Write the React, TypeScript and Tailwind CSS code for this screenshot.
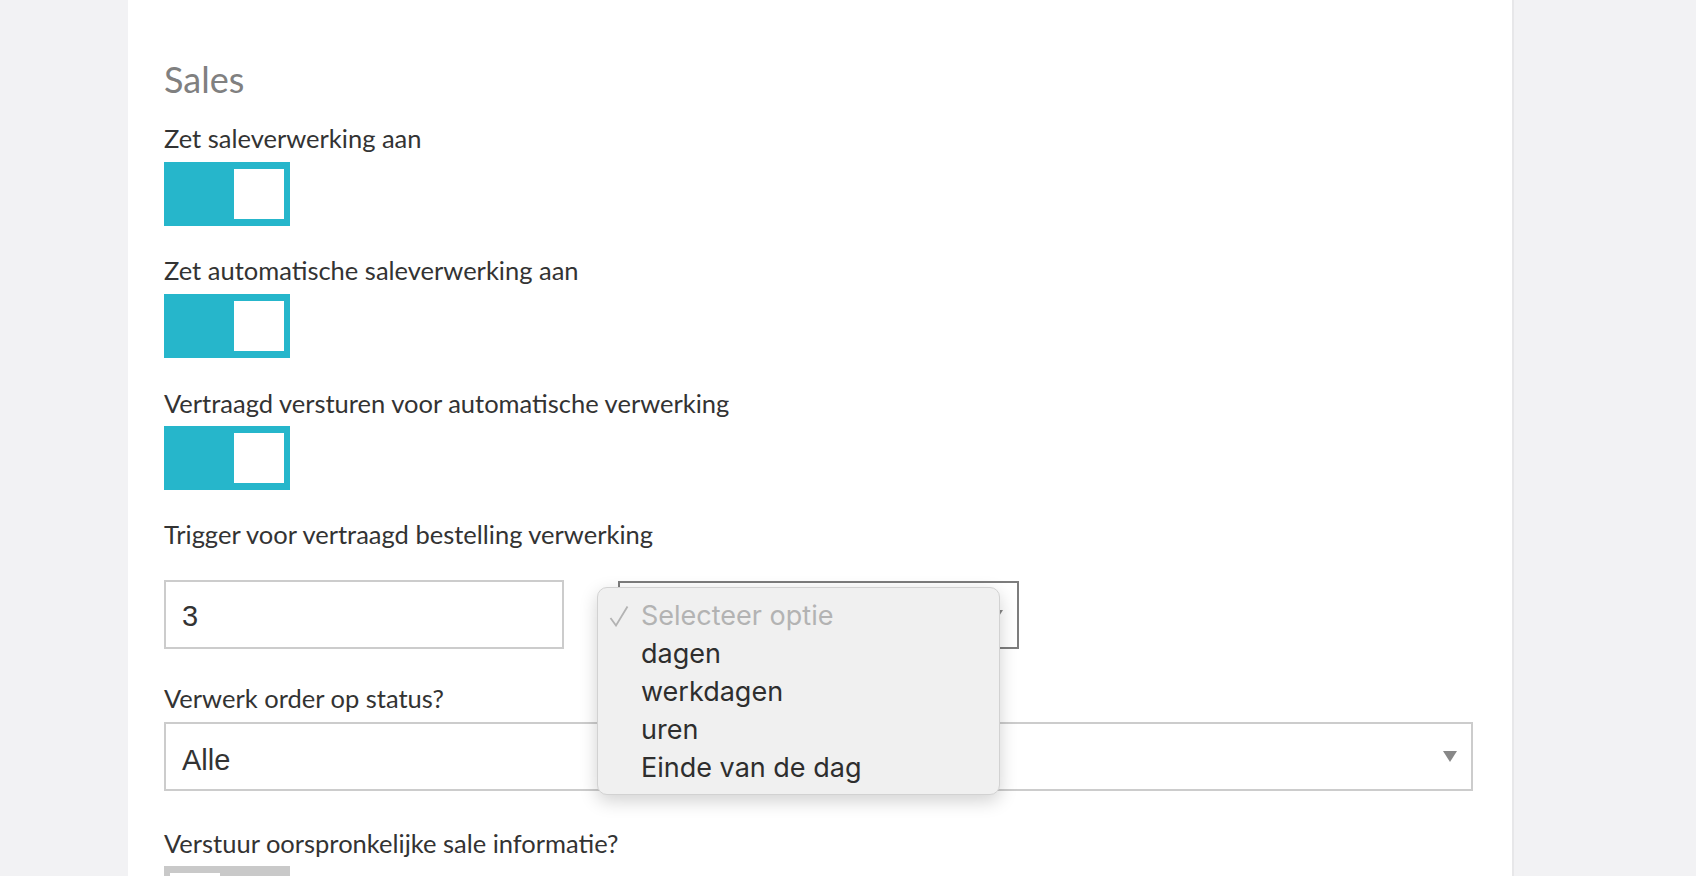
import React from "react";

function Toggle({ on, className = "" }: { on: boolean; className?: string }) {
  return (
    <div
      className={
        "flex h-[64px] w-[126px] shrink-0 items-center px-[6px] " +
        (on ? "justify-end bg-[#26b6cb]" : "justify-start bg-[#c9c9c9]") +
        " " +
        className
      }
    >
      <div className="h-[50px] w-[50px] shrink-0 bg-white" />
    </div>
  );
}

function Label({ children, className = "" }: { children: React.ReactNode; className?: string }) {
  return (
    <div className={"shrink-0 text-[25.5px] leading-[36px] text-[#333333] " + className}>{children}</div>
  );
}

function Arrow() {
  return (
    <svg width="14" height="11" viewBox="0 0 14 11" className="shrink-0">
      <polygon points="0,0 14,0 7,11" fill="#888888" />
    </svg>
  );
}

export default function App() {
  return (
    <div className="flex h-[876px] w-full overflow-hidden bg-[#f2f2f4] font-['Lato','Noto_Sans',sans-serif]">
      <div className="w-[128px] shrink-0" />
      <div className="flex w-[1386px] shrink-0 flex-col border-r-2 border-[#e7e7e9] bg-white pl-[36px] pr-[39px] pt-[58px]">
        <h2 className="shrink-0 text-[36px] font-normal leading-[43px] text-[#808080]">Sales</h2>

        <Label className="mt-[19px]">Zet saleverwerking aan</Label>
        <Toggle on className="mt-[6px]" />

        <Label className="mt-[26px]">Zet automatische saleverwerking aan</Label>
        <Toggle on className="mt-[6px]" />

        <Label className="mt-[27px]">Vertraagd versturen voor automatische verwerking</Label>
        <Toggle on className="mt-[5px]" />

        <Label className="mt-[26px]">Trigger voor vertraagd bestelling verwerking</Label>

        <div className="relative mt-[28px] flex shrink-0 items-start gap-[54px]">
          <div className="flex h-[69px] w-[400px] shrink-0 items-center border-2 border-[#cccccc] bg-white pl-[16px] pt-[5px] font-['Liberation_Sans',Arial,sans-serif] text-[29px] text-[#333333]">
            3
          </div>
          <div className="mt-[1px] flex h-[68px] w-[401px] shrink-0 items-center justify-end border-2 border-[#7d7d7d] bg-white pr-[14px]">
            <Arrow />
          </div>

          <div className="absolute left-[433px] top-[7px] w-[403px] rounded-[10px] border border-[#d2d2d2] bg-[#f0f0f0] pb-[7px] pt-[9px] font-['Inter','Noto_Sans',sans-serif] text-[27px] leading-[38px] text-[#2e2e2e] shadow-[0_6px_18px_rgba(0,0,0,0.18)]">
            <div className="flex items-center">
              <div className="flex w-[43px] justify-end pr-[12px]">
                <svg width="20" height="22" viewBox="0 0 20 22">
                  <polyline points="1.5,13 7,20.5 18.5,1.5" fill="none" stroke="#b3b3b3" strokeWidth="1.8" />
                </svg>
              </div>
              <span className="text-[#b3b3b3]">Selecteer optie</span>
            </div>
            <div className="pl-[43px]">dagen</div>
            <div className="pl-[43px]">werkdagen</div>
            <div className="pl-[43px]">uren</div>
            <div className="pl-[43px]">Einde van de dag</div>
          </div>
        </div>

        <Label className="mt-[31px]">Verwerk order op status?</Label>
        <div className="mt-[6px] flex h-[69px] w-full shrink-0 items-center justify-between border-2 border-[#cccccc] bg-white pl-[16px] pr-[14px] font-['Liberation_Sans',Arial,sans-serif] text-[29px] text-[#333333]">
          <span className="pt-[8px]">Alle</span>
          <Arrow />
        </div>

        <Label className="mt-[34px]">Verstuur oorspronkelijke sale informatie?</Label>
        <Toggle on={false} className="mt-[5px]" />
      </div>
    </div>
  );
}
